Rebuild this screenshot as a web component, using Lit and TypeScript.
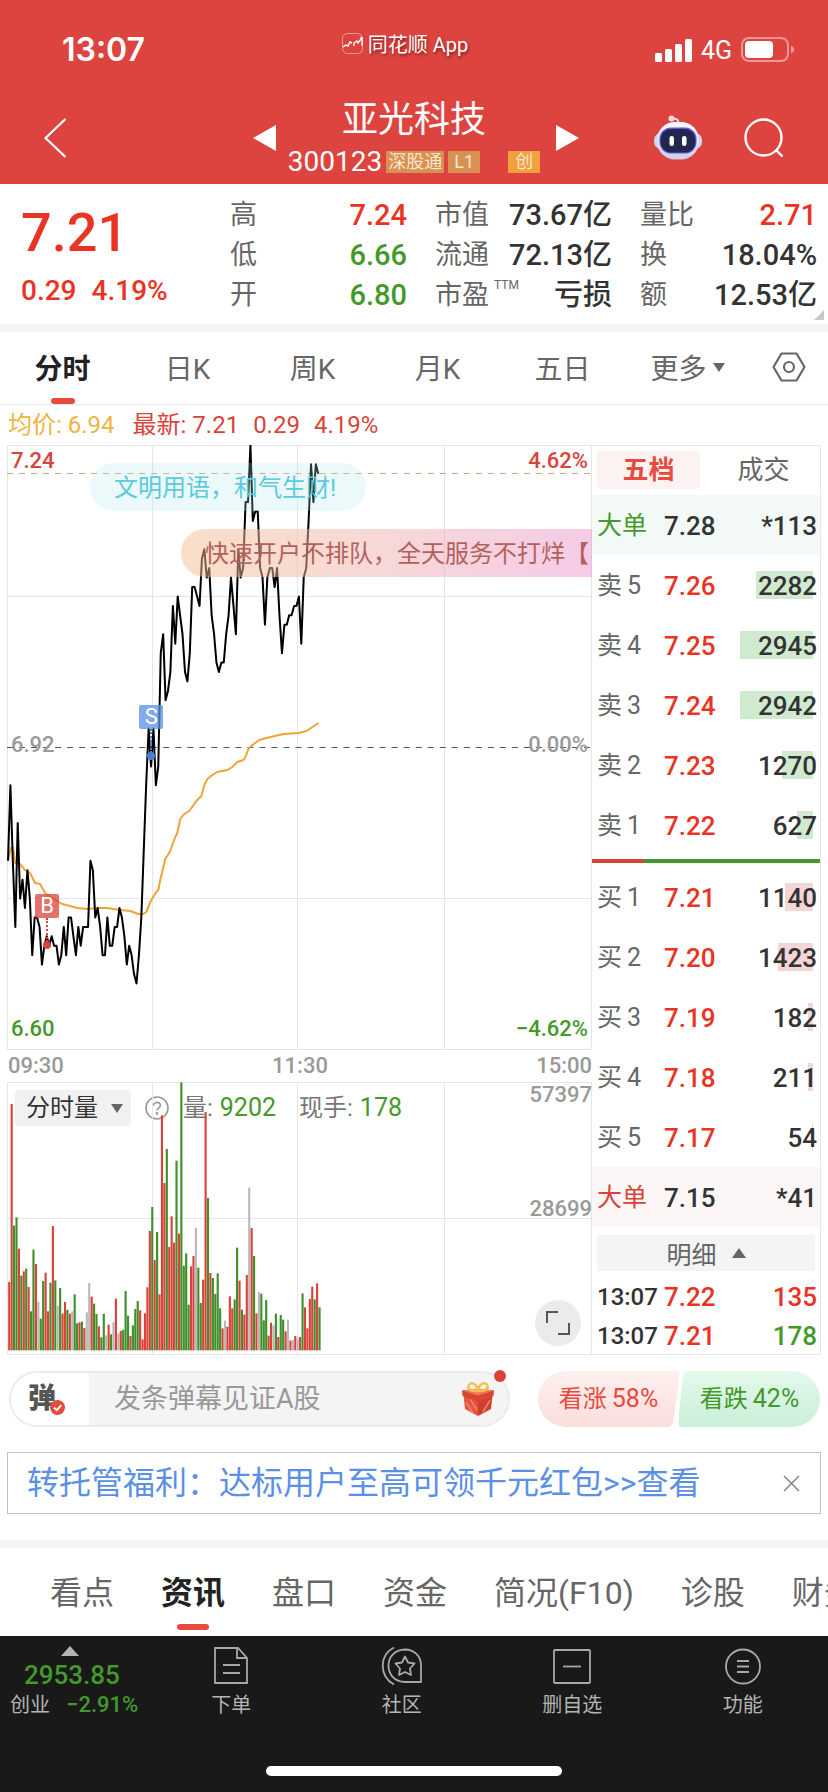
import { LitElement, html, svg, css } from "lit";
import { customElement, state } from "lit/decorators.js";
import { classMap } from "lit/directives/class-map.js";

const base = css`
  * { box-sizing: border-box; }
  button { font: inherit; color: inherit; background: none; border: 0; padding: 0; margin: 0; cursor: pointer; }
  a { color: inherit; text-decoration: none; }
  svg { display: block; }
  .up { color: #e93323; }
  .down { color: #43992a; }
`;

// Price per minute, in cents below the previous close (6.92)
const TICKS = [
  12, 4, 12, 19, 8, 16, 14, 17, 13, 16, 22, 18, 18, 19, 23, 21, 20, 21, 20, 21, 21, 23, 22, 19, 22, 18, 18, 20, 22, 19,
  21, 19, 19, 19, 12, 13, 18, 17, 19, 22, 22, 18, 21, 21, 19, 19, 17, 18, 20, 23, 21, 22, 24, 25, 22, 18, 11, 4, -2, 2,
  -2, 4, 2, -10, -12, -5, -6, -8, -15, -11, -16, -14, -12, -8, -7, -10, -17, -17, -16, -15, -20, -21, -18, -19, -14,
  -12, -9, -8, -9, -9, -12, -14, -18, -15, -12, -21, -18, -19, -26, -26, -32, -24, -25, -25, -19, -18, -13, -18, -19,
  -19, -17, -19, -14, -10, -13, -13, -14, -14, -15, -15, -16, -11, -18, -19, -24, -30, -26, -30, -29,
];

const AVERAGE =
  "1,415 4,403 6,402 8,418 13,419 18,425 23,428 28,438 33,439 38,448 46,454 55,459 63,461 70,463 81,464 90,463 100,463 113,465 123,466 131,469 136,469 139,467 144,455 149,447 151,445 153,435 158,414 163,406 165,400 168,392 170,388 173,374 177,369 182,366 189,356 194,351 197,340 200,334 205,330 210,327 220,325 225,322 230,317 236,315 238,312 241,304 245,300 252,295 263,292 276,289 291,288 299,286 311,278";

// Volume bars: top of each bar and its colour (r rise, g fall, x flat)
const VOLUME =
  "667r 133r 498g 473g 567r 648g 635r 627g 682r 755g 570g 613r 726x 777g 664g 639r 755r 669g 499r 662g 738x 685g 762r 727r 750g 762r 755x 704g 791g 788r 786g 805r 758x 670x 711r 732g 763g 800r 833g 762g 827x 795r 824g 788x 717r 822x 814r 810g 694g 768g 829r 797g 748g 724g 752r 839r 761r 683r 514r 442g 601r 517g 704r 167r 370r 268g 562r 470r 549r 303g 522r 68g 618g 581g 735g 620r 589r 505x 624g 730g 660r 157r 415g 640r 655g 703g 641g 746g 806r 783x 801r 710r 746r 719g 564g 663r 750g 765r 646r 384x 505r 589g 761r 697x 702g 782g 721g 828r 789r 797x 762g 832r 766g 780g 815r 780x 843r 841x 829r 836x 832r 701g 743r 806r 718r 681r 719g 671r 743g";

const VOLUME_FLOOR = 872;
const BAR_COLORS: Record<string, string> = { r: "#d8433a", g: "#3f8f2a", x: "#b9b9b9" };

@customElement("time-chart")
export class TimeChart extends LitElement {
  static styles = [
    base,
    css`
      :host { display: block; position: relative; }
      .price { position: relative; height: 605px; overflow: hidden; }
      .plot { position: absolute; inset: 0; width: 100%; height: 100%; pointer-events: none; }
      .grid { stroke: #e6e6e6; stroke-width: 1; fill: none; shape-rendering: crispEdges; }
      .label { position: absolute; font-size: 22px; line-height: 24px; font-weight: 500; }
      .left { left: 4px; }
      .right { right: 4px; }
      .top { top: 4px; color: #d8433a; }
      .middle { top: 288px; color: #999; }
      .bottom { bottom: 9px; color: #43992a; }
      .marker { position: absolute; width: 24px; margin-left: -12px; display: flex; flex-direction: column; align-items: center; }
      .flag { width: 24px; height: 24px; border-radius: 2px; color: #fff; font-size: 22px; line-height: 24px; text-align: center; }
      .stem { height: 24px; border-left: 2px dotted; }
      .dot { width: 8px; height: 8px; border-radius: 4px; margin-top: -1px; }
      .buy { color: #d8433a; }
      .buy .flag { background: rgba(216, 67, 58, 0.75); }
      .buy .dot { background: #d8433a; }
      .sell { color: #4a7fd8; }
      .sell .flag { background: rgba(90, 144, 232, 0.75); }
      .sell .dot { background: #4a7fd8; }
      .bullet { position: absolute; height: 48px; line-height: 50px; font-size: 24px; white-space: nowrap; padding: 0 24px; }
      .polite { left: 83px; top: 18px; padding-right: 30px; border-radius: 24px; background: rgba(170, 230, 236, 0.24); color: #5acbdc; }
      .promo {
        left: 174px; right: 0; top: 84px; border-radius: 24px 0 0 24px; padding-right: 0; overflow: hidden;
        color: #b5615b; background: linear-gradient(100deg, rgba(243, 190, 145, 0.5), rgba(238, 180, 172, 0.5) 45%, rgba(235, 150, 210, 0.5));
      }
      .times { height: 32px; display: flex; justify-content: space-between; padding: 0 0 0 1px; font-size: 22px; line-height: 31px; font-weight: 500; color: #999; }
      .volume { position: relative; height: 273px; }
      .legend { display: flex; align-items: center; padding: 8px 0 0 8px; font-size: 24px; line-height: 36px; color: #777; }
      .pick { display: flex; align-items: center; gap: 13px; height: 36px; padding: 0 8px 0 11px; border-radius: 4px; background: #f1f1f1; color: #333; }
      .help { width: 24px; height: 24px; margin: 0 14px; }
      .key { margin-right: 7px; }
      .key + .num { margin-right: 23px; }
      .num { color: #43992a; font-size: 25px; }
      .scale { position: absolute; right: 0; font-size: 22px; line-height: 24px; font-weight: 500; color: #999; }
      .max { top: 1px; }
      .half { top: 115px; }
      .expand { position: absolute; right: 11px; bottom: 9px; width: 46px; height: 46px; border-radius: 23px; background: #ebebeb; display: grid; place-items: center; }
    `,
  ];

  private grid(height: number, rows: number[]) {
    return svg`<path class="grid" d=${
      `M.5 .5H583.5V${height - 0.5}H.5Z` + rows.map((y) => `M0 ${y}.5H584`).join("") + [145, 290, 436].map((x) => `M${x}.5 0V${height}`).join("")
    } />`;
  }

  render() {
    const line = TICKS.map((t, i) => `${(1 + i * 2.42).toFixed(1)},${(302.5 + t * 9.44).toFixed(1)}`).join(" ");
    return html`
      <div class="price">
        <svg class="plot" viewBox="0 0 584 605" preserveAspectRatio="none">
          ${this.grid(605, [151, 453])}
          <path d="M0 302.5H584" stroke="#555" stroke-dasharray="6 6" />
          <path d="M0 28.5H584" stroke="#cfa77e" stroke-dasharray="6 6" />
          <polyline points=${AVERAGE} fill="none" stroke="#f0a437" stroke-width="2" stroke-linejoin="round" />
          <polyline points=${line} fill="none" stroke="#000" stroke-width="2" stroke-linejoin="round" />
        </svg>
        <span class="label left top">7.24</span><span class="label right top">4.62%</span>
        <span class="label left middle">6.92</span><span class="label right middle">0.00%</span>
        <span class="label left bottom">6.60</span><span class="label right bottom">−4.62%</span>
        <div class="marker buy" style="left:${(40 / 584) * 100}%;top:449px">
          <span class="flag">B</span><span class="stem"></span><span class="dot"></span>
        </div>
        <div class="marker sell" style="left:${(144 / 584) * 100}%;top:260px">
          <span class="flag">S</span><span class="stem"></span><span class="dot"></span>
        </div>
        <div class="bullet polite">文明用语，和气生财!</div>
        <div class="bullet promo">快速开户不排队，全天服务不打烊【</div>
      </div>
      <div class="times"><span>09:30</span><span>11:30</span><span>15:00</span></div>
      <div class="volume">
        <div class="legend">
          <button class="pick">
            分时量
            <svg width="12" height="9" viewBox="0 0 12 9"><path d="M0 0H12L6 9Z" fill="#666" /></svg>
          </button>
          <button class="help" aria-label="说明">
            <svg width="24" height="24" viewBox="0 0 24 24" fill="none" stroke="#999" stroke-width="1.6">
              <circle cx="12" cy="12" r="11" />
              <path d="M8.600 9.600C8.600 5.400 15.400 5.400 15.400 9.400C15.400 11.800 12 11.800 12 14.600" />
              <circle cx="12" cy="17.500" r=".6" />
            </svg>
          </button>
          <span class="key">量:</span><span class="num">9202</span>
          <span class="key">现手:</span><span class="num">178</span>
        </div>
        <svg class="plot" viewBox="0 0 584 273" preserveAspectRatio="none">${this.grid(273, [136])}</svg>
        <svg class="plot" viewBox="21 67 1752 819" preserveAspectRatio="none">
          ${VOLUME.split(" ").map((bar, i) => {
            const top = parseInt(bar, 10);
            return svg`<rect x=${24.5 + i * 7.26} y=${top} width="6.4" height=${VOLUME_FLOOR - top} fill=${BAR_COLORS[bar.slice(-1)]} />`;
          })}
        </svg>
        <span class="scale max">57397</span><span class="scale half">28699</span>
        <button class="expand" aria-label="全屏">
          <svg width="24" height="24" viewBox="0 0 24 24" fill="none" stroke="#555" stroke-width="2">
            <path d="M1 12V1H12M23 12V23H12" />
          </svg>
        </button>
      </div>
    `;
  }
}

const SELL = [["卖", "5", "7.26", "2282", 57], ["卖", "4", "7.25", "2945", 73], ["卖", "3", "7.24", "2942", 73], ["卖", "2", "7.23", "1270", 31], ["卖", "1", "7.22", "627", 16]] as const;
const BUY = [["买", "1", "7.21", "1140", 28], ["买", "2", "7.20", "1423", 35], ["买", "3", "7.19", "182", 5], ["买", "4", "7.18", "211", 5], ["买", "5", "7.17", "54", 1]] as const;

@customElement("order-book")
export class OrderBook extends LitElement {
  static styles = [
    base,
    css`
      :host { display: block; border: solid #e6e6e6; border-width: 1px 1px 1px 0; }
      .tabs { display: grid; grid-template-columns: 103px 1fr; gap: 5px; padding: 5px 5px 6px; font-size: 26px; line-height: 38px; color: #666; }
      .tab { padding: 1px 0 0 7px; line-height: 37px; }
      .active { padding-left: 0; background: #fdf2f2; border-radius: 4px; color: #e74a3e; font-weight: 700; }
      table { width: 100%; border-collapse: collapse; table-layout: fixed; font-size: 26px; }
      td, th { padding: 2px 0 0; height: 60px; font-weight: 500; text-align: left; line-height: 38px; color: #333; }
      th { width: 72px; padding-left: 5px; font-weight: 400; font-size: 25px; color: #666; white-space: nowrap; }
      .n { margin-left: 5px; }
      .price { width: 60px; }
      .qty { text-align: right; padding-right: 3px; background-repeat: no-repeat; background-position: right 7px center; }
      .sell .qty { background-image: linear-gradient(#d0ead0, #d0ead0); }
      .buy .qty { background-image: linear-gradient(#f5d6d6, #f5d6d6); }
      .bigsell { background: #f3f9f6; }
      .bigbuy { background: #fdf6f6; }
      td.up { color: #e93323; }
      td.down { color: #43992a; }
      th.down { color: #43992a; }
      th.up { color: #d8433a; }
      .ratio { display: flex; height: 4px; margin: 4px 0; background: #43992a; }
      .share { width: 23%; background: #d8433a; }
      .detail { display: flex; align-items: center; justify-content: center; gap: 15px; width: calc(100% - 10px); height: 36px; margin: 8px 5px 5px; background: #f4f4f4; color: #666; font-size: 25px; }
      .deals td, .deals th { height: 39px; line-height: 36px; }
      .deals th { color: #333; font-weight: 500; font-size: 24px; }
    `,
  ];

  private row(kind: string, [side, n, price, qty, width]: readonly [string, string, string, string, number]) {
    return html`<tr class=${kind}>
      <th scope="row">${side}<span class="n">${n}</span></th>
      <td class="price up">${price}</td>
      <td class="qty" style="background-size:${width}px 28px">${qty}</td>
    </tr>`;
  }

  render() {
    return html`
      <div class="tabs"><button class="tab active">五档</button><button class="tab">成交</button></div>
      <table>
        <tr class="bigsell"><th class="down" scope="row">大单</th><td class="price">7.28</td><td class="qty">*113</td></tr>
        ${SELL.map((r) => this.row("sell", r))}
      </table>
      <div class="ratio"><div class="share"></div></div>
      <table>
        ${BUY.map((r) => this.row("buy", r))}
        <tr class="bigbuy"><th class="up" scope="row">大单</th><td class="price">7.15</td><td class="qty">*41</td></tr>
      </table>
      <button class="detail">
        明细
        <svg width="14" height="10" viewBox="0 0 14 10"><path d="M0 10H14L7 0Z" fill="#666" /></svg>
      </button>
      <table class="deals">
        <tr><th scope="row">13:07</th><td class="price up">7.22</td><td class="qty up">135</td></tr>
        <tr><th scope="row">13:07</th><td class="price up">7.21</td><td class="qty down">178</td></tr>
      </table>
    `;
  }
}

@customElement("app-root")
export class AppRoot extends LitElement {
  @state() private period = 0;
  @state() private section = 1;

  static styles = [
    base,
    css`
      :host { display: block; background: #fff; color: #333; font-family: Roboto, "Noto Sans CJK SC", sans-serif; overflow: hidden; }
      h1 { margin: 0; font-weight: 400; }
      .head { background: #dd4440; color: #fff; }
      .status { display: grid; grid-template-columns: 1fr auto 1fr; height: 88px; padding: 28px 34px 0 16px; }
      .clock { padding-left: 46px; font-family: Inter, sans-serif; font-size: 32px; line-height: 44px; font-weight: 600; }
      .brand { display: flex; align-items: center; gap: 5px; height: 30px; font-size: 20px; text-shadow: 1px 2px 3px rgba(80, 0, 0, 0.6); }
      .signal { display: flex; align-items: center; justify-content: flex-end; gap: 9px; height: 44px; font-size: 25px; }
      .nav { display: grid; grid-template-columns: 1fr 330px 1fr; align-items: center; padding: 8px 44px 4px; }
      .stock { display: flex; align-items: center; justify-content: space-between; padding-left: 4px; }
      .name { padding-right: 4px; }
      .title { text-align: center; font-size: 36px; line-height: 48px; }
      .code { display: flex; align-items: center; gap: 4px; font-size: 28px; line-height: 36px; }
      .tag { height: 22px; min-width: 32px; padding: 0 2px; background: #d89053; color: #fbe6cf; font-size: 18px; line-height: 22px; text-align: center; }
      .board { margin-left: 24px; background: #f1a03c; }
      .tools { display: flex; align-items: center; justify-content: flex-end; gap: 42px; }
      .quote { position: relative; display: grid; grid-template-columns: 181px repeat(3, 1fr); column-gap: 28px; padding: 11px 11px 9px 21px; }
      .last { font-size: 54px; line-height: 76px; font-weight: 500; }
      .change { display: flex; gap: 15px; font-size: 28px; line-height: 36px; font-weight: 500; padding-top: 2px; white-space: nowrap; }
      dl { margin: 0; font-size: 28px; line-height: 40px; }
      .pair { display: flex; justify-content: space-between; height: 40px; white-space: nowrap; }
      dt { color: #666; font-size: 27px; }
      dd { margin: 0; font-weight: 500; font-size: 29px; }
      sup { font-size: 12px; line-height: 12px; vertical-align: 15px; margin-left: 5px; }
      .corner { position: absolute; right: 4px; bottom: 4px; }
      .band { height: 8px; background: #f4f4f4; }
      .periods { display: grid; grid-template-columns: repeat(6, 15.1%) 1fr; height: 73px; border-bottom: 1px solid #e8e8e8; font-size: 28px; color: #666; }
      .period, .section { position: relative; display: flex; align-items: center; justify-content: center; gap: 6px; white-space: nowrap; }
      .period { padding-bottom: 2px; }
      .on { color: #222; font-weight: 700; }
      .on::after { content: ""; position: absolute; left: 50%; bottom: 0; width: 24px; height: 6px; margin-left: -12px; border-radius: 3px; background: #e74a3e; }
      .info { display: flex; gap: 14px; padding: 0 8px; font-size: 24px; line-height: 40px; color: #d8433a; }
      .avg { color: #efb33f; margin-right: 4px; }
      .market { display: grid; grid-template-columns: 1fr 229px; margin: 0 7px; }
      .interact { display: grid; grid-template-columns: 1fr 282px; gap: 28px; padding: 16px 8px 0 9px; }
      .chat { position: relative; display: flex; align-items: center; height: 56px; border: 2px solid #ececec; border-radius: 28px; background: #f4f4f4; }
      .toggle { position: relative; width: 78px; height: 52px; border-radius: 26px 0 0 26px; background: #fff; font-size: 28px; font-weight: 900; color: #555; text-align: left; padding-left: 17px; line-height: 48px; }
      .check { position: absolute; left: 39px; top: 27px; }
      .say { flex: 1; min-width: 0; margin-left: 25px; border: 0; outline: 0; padding: 0; background: none; font: inherit; font-size: 27px; color: #333; }
      .say::placeholder { color: #999; opacity: 1; }
      .gift { margin-right: 13px; }
      .ping { position: absolute; right: 2px; top: -3px; width: 12px; height: 12px; border-radius: 6px; background: #d8433a; }
      .votes { display: grid; grid-template-columns: 1fr 1fr; height: 56px; font-size: 24px; }
      .vote { position: relative; text-align: center; line-height: 56px; }
      .bull { color: #e74a3e; }
      .bear { color: #43992a; }
      .shape { position: absolute; inset: 0; width: 100%; height: 100%; }
      .word { position: relative; }
      .word b { margin-left: 5px; font-size: 25px; font-weight: 400; }
      .notice { display: flex; align-items: center; justify-content: space-between; margin: 25px 7px 26px; padding: 0 20px 0 19px; height: 62px; border: 1px solid #c4c4c4; font-size: 32px; color: #5a90e6; white-space: nowrap; }
      .notice a { line-height: 60px; }
      .sections { display: flex; gap: 47px; height: 88px; padding-left: 50px; font-size: 32px; color: #666; overflow: hidden; }
      .section { flex: none; height: 88px; padding-bottom: 4px; }
      .section.on::after { width: 32px; margin-left: -16px; bottom: 6px; }
      .foot { background: #191919; color: #b4b4b4; padding-bottom: 16px; }
      .menu { display: grid; grid-template-columns: 146px repeat(4, 1fr); align-items: start; height: 130px; font-size: 20px; }
      .index { padding: 10px 0 0 10px; line-height: 30px; text-align: left; color: #b4b4b4; }
      .peak { margin: 0 auto 4px 51px; }
      .points { display: block; padding-left: 14px; font-size: 26px; font-weight: 500; }
      .delta { display: flex; gap: 16px; white-space: nowrap; }
      .delta .down { font-size: 22px; font-weight: 500; }
      .item { display: flex; flex-direction: column; align-items: center; gap: 4px; padding-top: 10px; line-height: 30px; }
      .home { width: 296px; height: 10px; border-radius: 5px; background: #fff; margin: 0 auto; }
    `,
  ];

  private pair(label: unknown, value: string, tone = "") {
    return html`<div class="pair"><dt>${label}</dt><dd class=${tone}>${value}</dd></div>`;
  }

  render() {
    const periods = ["分时", "日K", "周K", "月K", "五日", "更多"];
    const sections = ["看点", "资讯", "盘口", "资金", "简况(F10)", "诊股", "财务"];
    return html`
      <header class="head">
        <div class="status">
          <span class="clock">13:07</span>
          <span class="brand">
            <svg width="21" height="21" viewBox="0 0 21 21" fill="none" stroke="#fff">
              <rect x=".5" y=".5" width="20" height="20" rx="5" stroke-opacity=".45" />
              <path d="M1 14L4 12L6 13L8 9L10 10M12 13V10L15 8L16 10L19 6V4M20 4V13" stroke-width="1.4" />
            </svg>
            同花顺 App
          </span>
          <span class="signal">
            <svg width="37" height="23" viewBox="0 0 37 23" fill="#fff">
              <rect y="14" width="7" height="9" rx="1.500" /><rect x="10" y="10" width="7" height="13" rx="1.500" />
              <rect x="20" y="5" width="7" height="18" rx="1.500" /><rect x="30" width="7" height="23" rx="1.500" />
            </svg>
            4G
            <svg width="53" height="26" viewBox="0 0 53 26">
              <rect x="1" y="1" width="46" height="23" rx="7" fill="none" stroke="#fff" stroke-opacity=".45" stroke-width="2" />
              <rect x="4" y="4" width="28" height="17" rx="4" fill="#fff" />
              <path d="M50 9C54 10 54 15 50 16Z" fill="#fff" fill-opacity=".5" />
            </svg>
          </span>
        </div>
        <nav class="nav">
          <button aria-label="返回">
            <svg width="23" height="40" viewBox="0 0 23 40" fill="none" stroke="#fff" stroke-width="2.200"><path d="M21.500 1L1.500 20L21.500 39" /></svg>
          </button>
          <div class="stock">
            <button aria-label="上一只"><svg width="23" height="26" viewBox="0 0 23 26"><path d="M23 0V26L0 13Z" fill="#fff" /></svg></button>
            <div class="name">
              <h1 class="title">亚光科技</h1>
              <div class="code">300123<span class="tag">深股通</span><span class="tag">L1</span><span class="tag board">创</span></div>
            </div>
            <button aria-label="下一只"><svg width="23" height="26" viewBox="0 0 23 26"><path d="M0 0V26L23 13Z" fill="#fff" /></svg></button>
          </div>
          <div class="tools">
            <button aria-label="智能助手">
              <svg width="48" height="46" viewBox="0 0 48 46">
                <defs><linearGradient id="shell" x2="0" y2="1"><stop stop-color="#fbfaff" /><stop offset="1" stop-color="#cfcbea" /></linearGradient></defs>
                <path d="M24 9C25 4 22 3 18 4" fill="none" stroke="#e6dff0" stroke-width="2" />
                <circle cx="17.500" cy="3.500" r="3" fill="#f3d8de" />
                <rect y="18" width="48" height="16" rx="7" fill="#d2d2ee" />
                <rect x="3" y="7" width="42" height="37.500" rx="18" fill="url(#shell)" />
                <rect x="5.500" y="12.500" width="37" height="26" rx="11.500" fill="#6a55dc" />
                <rect x="6.500" y="14" width="35" height="23.500" rx="10.500" fill="#20284d" />
                <rect x="15.500" y="21" width="4.500" height="10" rx="2.200" fill="#fff" /><rect x="28" y="21" width="4.500" height="10" rx="2.200" fill="#fff" />
              </svg>
            </button>
            <button aria-label="搜索">
              <svg width="40" height="40" viewBox="0 0 40 40" fill="none" stroke="#fff" stroke-width="2.400"><circle cx="19.500" cy="19.500" r="18" /><path d="M32 32L38.500 38.500" /></svg>
            </button>
          </div>
        </nav>
      </header>

      <section class="quote">
        <div class="up">
          <div class="last">7.21</div>
          <div class="change"><span>0.29</span><span>4.19%</span></div>
        </div>
        <dl>${this.pair("高", "7.24", "up")}${this.pair("低", "6.66", "down")}${this.pair("开", "6.80", "down")}</dl>
        <dl>${this.pair("市值", "73.67亿")}${this.pair("流通", "72.13亿")}${this.pair(html`市盈<sup>TTM</sup>`, "亏损")}</dl>
        <dl>${this.pair("量比", "2.71", "up")}${this.pair("换", "18.04%")}${this.pair("额", "12.53亿")}</dl>
        <svg class="corner" width="10" height="10" viewBox="0 0 10 10"><path d="M10 0V10H0Z" fill="#c8c8c8" /></svg>
      </section>
      <div class="band"></div>

      <nav class="periods">
        ${periods.map(
          (p, i) => html`<button class=${classMap({ period: true, on: this.period === i })} @click=${() => (this.period = i)}>
            ${p}${i === 5 ? html`<svg width="12" height="9" viewBox="0 0 12 9"><path d="M0 0H12L6 9Z" fill="#666" /></svg>` : ""}
          </button>`
        )}
        <button class="period" aria-label="设置">
          <svg width="34" height="30" viewBox="0 0 34 30" fill="none" stroke="#666" stroke-width="2.200" stroke-linejoin="round">
            <path d="M9.500 1.500H24.500L32.500 15L24.500 28.500H9.500L1.500 15Z" /><circle cx="17" cy="15" r="5" />
          </svg>
        </button>
      </nav>
      <div class="info"><span class="avg">均价: 6.94</span><span>最新: 7.21</span><span>0.29</span><span>4.19%</span></div>

      <main class="market"><time-chart></time-chart><order-book></order-book></main>

      <div class="interact">
        <div class="chat">
          <button class="toggle" aria-label="弹幕开关">弹
            <svg class="check" width="15" height="15" viewBox="0 0 15 15"><circle cx="7.500" cy="7.500" r="7.500" fill="#e74a3e" /><path d="M4 7.500L6.800 10.200L11.200 5.200" fill="none" stroke="#fff" stroke-width="1.800" /></svg>
          </button>
          <input class="say" aria-label="发条弹幕" placeholder="发条弹幕见证A股" />
          <button class="gift" aria-label="礼物">
            <svg width="34" height="36" viewBox="0 0 34 36">
              <path d="M2.500 14L17 19V35L4 28Z" fill="#e2553d" /><path d="M31.500 14L17 19V35L30 28Z" fill="#cf3f30" />
              <path d="M5 21L12 32M9 18L16 29M29 19L22 31" stroke="#f08468" stroke-width="1.500" />
              <path d="M1 9.500L17 8L33 9.500L32.500 15L17 21L1.500 15Z" fill="#d9452f" /><path d="M1 9.500L17 7.500L33 9.500L17 14.500Z" fill="#f0795a" />
              <path d="M17 10C12 10 6 9 7.500 5C9 0 16 2 17 10C18 2 25 0 26.500 5C28 9 22 10 17 10Z" fill="none" stroke="#f3c14f" stroke-width="2.500" />
            </svg>
          </button>
          <span class="ping"></span>
        </div>
        <div class="votes">
          <button class="vote bull">
            <svg class="shape" viewBox="0 0 141 56" preserveAspectRatio="none">
              <defs><linearGradient id="bull" x2="0" y2="1"><stop stop-color="#fdf0ef" /><stop offset="1" stop-color="#f9dedc" /></linearGradient></defs>
              <path d="M28 0H138Q143 0 142 5L135 51Q134 56 129 56H28A28 28 0 0 1 28 0Z" fill="url(#bull)" />
            </svg>
            <span class="word">看涨<b>58%</b></span>
          </button>
          <button class="vote bear">
            <svg class="shape" viewBox="0 0 141 56" preserveAspectRatio="none">
              <defs><linearGradient id="bear" x2="0" y2="1"><stop stop-color="#e4f9ec" /><stop offset="1" stop-color="#c9efd7" /></linearGradient></defs>
              <path d="M9 0H113A28 28 0 0 1 113 56H3Q-2 56 -1 51L4 5Q5 0 9 0Z" fill="url(#bear)" />
            </svg>
            <span class="word">看跌<b>42%</b></span>
          </button>
        </div>
      </div>

      <div class="notice">
        <a href="#promo">转托管福利：达标用户至高可领千元红包&gt;&gt;查看</a>
        <button aria-label="关闭"><svg width="17" height="17" viewBox="0 0 17 17" stroke="#888" stroke-width="1.600"><path d="M1 1L16 16M16 1L1 16" /></svg></button>
      </div>
      <div class="band"></div>
      <nav class="sections">
        ${sections.map(
          (s, i) => html`<button class=${classMap({ section: true, on: this.section === i })} @click=${() => (this.section = i)}>${s}</button>`
        )}
      </nav>

      <footer class="foot">
        <nav class="menu">
          <button class="index">
            <svg class="peak" width="18" height="10" viewBox="0 0 18 10"><path d="M0 10H18L9 0Z" fill="#b4b4b4" /></svg>
            <span class="points down">2953.85</span>
            <span class="delta"><span>创业</span><span class="down">−2.91%</span></span>
          </button>
          <button class="item">
            <svg width="42" height="40" viewBox="0 0 42 40" fill="none" stroke="#a8a8a8" stroke-width="1.800">
              <path d="M5 2H28L37 12V37H5ZM27 2V12H37M13 19H30M13 27H30" />
            </svg>
            下单
          </button>
          <button class="item">
            <svg width="42" height="40" viewBox="0 0 42 40" fill="none" stroke="#a8a8a8" stroke-width="1.800" stroke-linejoin="round">
              <path d="M13 1.500C-2 9 -2 30 13 38.500M24 3.500C2 4 2 35.500 24 36H40V19.500C40 10 33 3.500 24 3.500Z" />
              <path d="M24 10.500L27 16.500L33.500 17.500L29 22.500L30 29L24 26L18 29L19 22.500L14.500 17.500L21 16.500Z" />
            </svg>
            社区
          </button>
          <button class="item">
            <svg width="42" height="40" viewBox="0 0 42 40" fill="none" stroke="#a8a8a8" stroke-width="1.800"><rect x="3" y="4" width="36" height="33" rx="1" /><path d="M12 20.500H30" /></svg>
            删自选
          </button>
          <button class="item">
            <svg width="42" height="40" viewBox="0 0 42 40" fill="none" stroke="#a8a8a8" stroke-width="1.800"><circle cx="21" cy="20.500" r="17" /><path d="M15 15H27M15 20.500H27M15 26H27" /></svg>
            功能
          </button>
        </nav>
        <div class="home"></div>
      </footer>
    `;
  }
}
